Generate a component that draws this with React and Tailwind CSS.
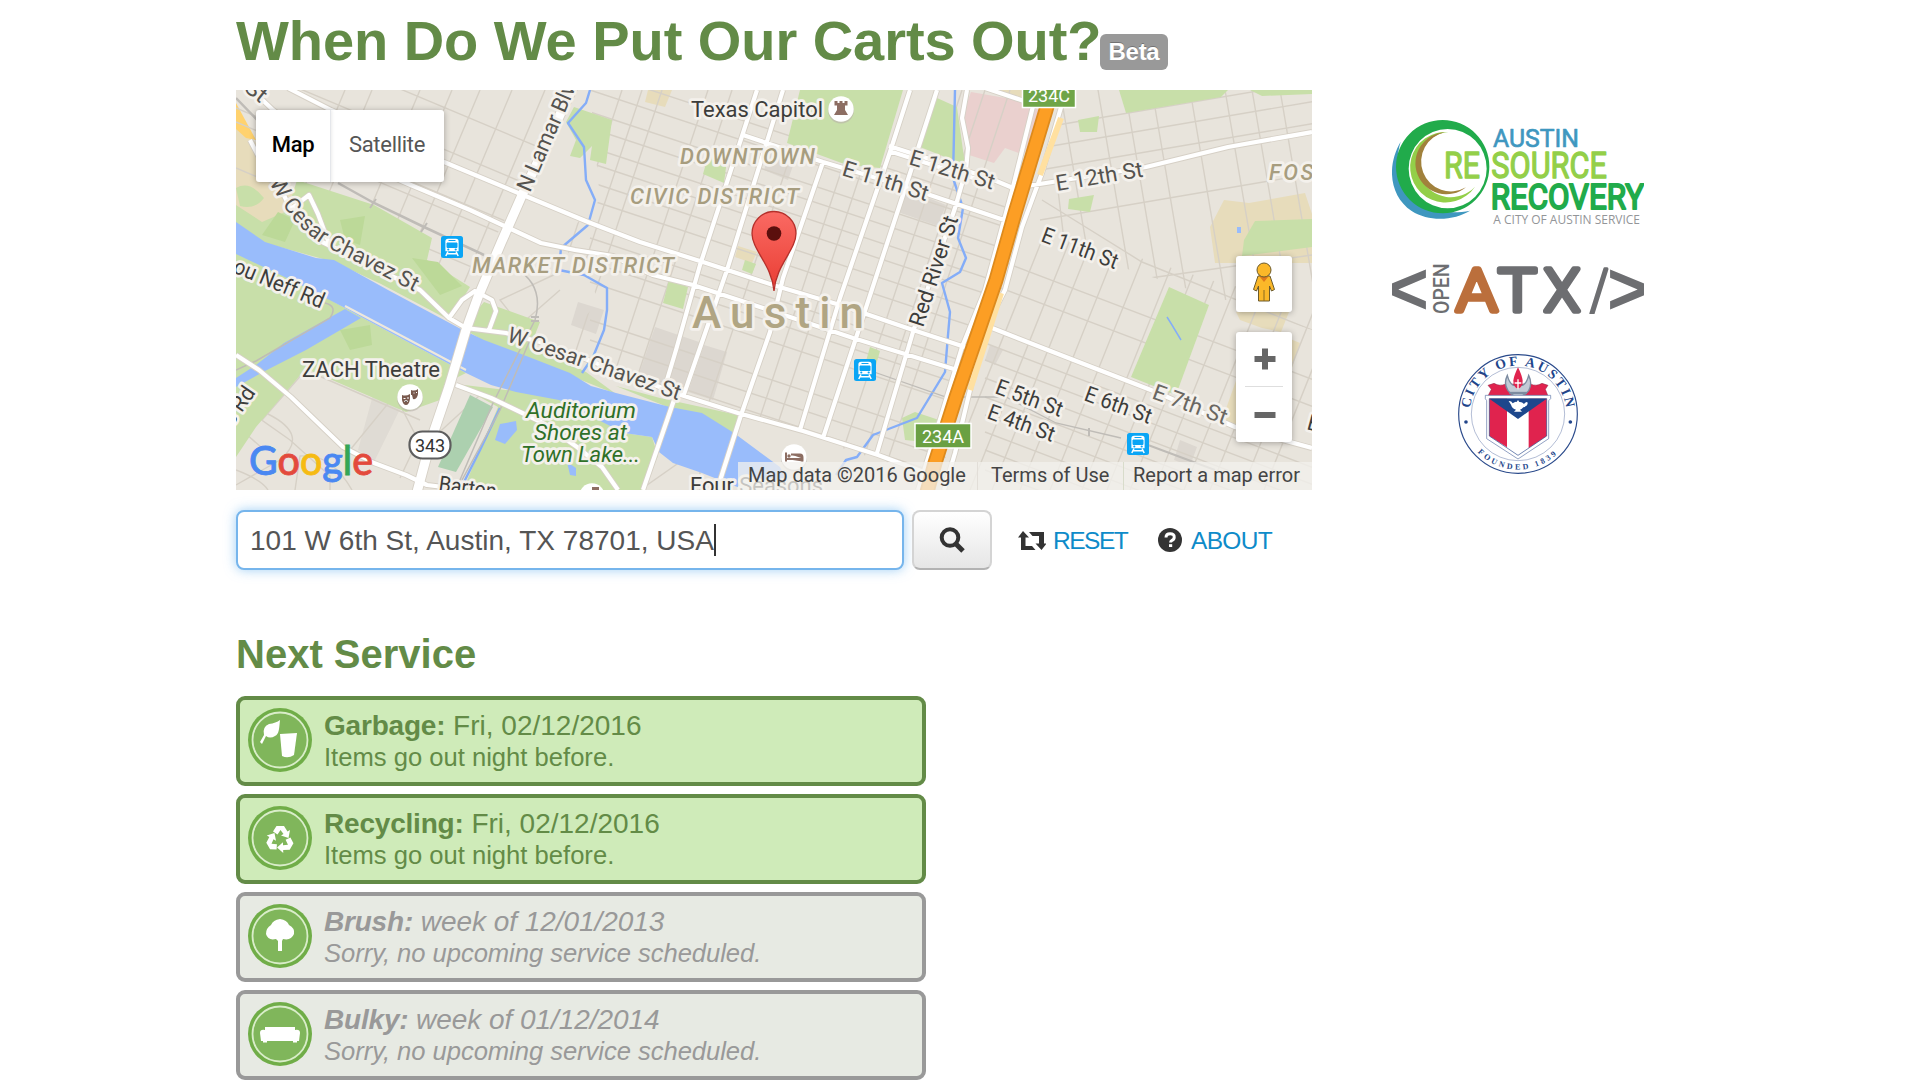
import React from "react";

const HALO = { paintOrder: "stroke", stroke: "#f4f1ec", strokeWidth: 5.5, strokeLinejoin: "round" };

/* Straight street or place label; w is the drawn width of the text. */
function Label({ x, y, w, r = 0, size = 22, fill = "#3d3d3b", italic, weight = 400, children }) {
  return (
    <text
      x={x}
      y={y}
      transform={`rotate(${r} ${x} ${y})`}
      textLength={w}
      lengthAdjust={italic && weight === 500 ? "spacing" : "spacingAndGlyphs"}
      fontFamily="Roboto, sans-serif"
      fontSize={size}
      fontWeight={weight}
      fontStyle={italic ? "italic" : "normal"}
      fill={fill}
      style={HALO}
    >
      {children}
    </text>
  );
}

/* Family of parallel minor streets: steep lines lean by `lean`, flat ones rise by `rise`. */
const steep = (xs, lean, top, bottom) =>
  xs.map((x) => `M${x} ${top}L${x + (bottom - top) * lean} ${bottom}`).join("");
const flat = (ys, rise, left, right) =>
  ys.map((y) => `M${left} ${y}L${right} ${y + (right - left) * rise}`).join("");

function Train({ x, y }) {
  return (
    <g transform={`translate(${x} ${y})`}>
      <rect width="22" height="22" rx="2.5" fill="#0aa5f5" />
      <path d="M7 2.8h8q2.6 0 2.6 2.6v9.8H4.4V5.4Q4.4 2.800 7 2.800z" fill="#fff" />
      <path d="M7.500 4.500h7M6 7h10v4.500H6z" fill="#0aa5f5" stroke="#0aa5f5" strokeWidth="1" />
      <circle cx="7.300" cy="13.500" r="1.100" fill="#0aa5f5" />
      <circle cx="14.700" cy="13.500" r="1.100" fill="#0aa5f5" />
      <path d="M7 15.500L4.800 20M15 15.500l2.200 4.500M6 17.800h10" stroke="#fff" strokeWidth="1.500" />
    </g>
  );
}

function Poi({ x, y, children }) {
  return (
    <g transform={`translate(${x} ${y})`}>
      <circle cy="1.500" r="13" fill="#b9b3ab" opacity=".6" />
      <circle r="12.700" fill="#fff" />
      {children}
    </g>
  );
}

const MAJOR = [
  "M250 88L273 110L300 130",
  "M288 88L331 110L444 162L523 195L588 222L640 242L703 262L773 285L840 305L913 330L965 347",
  "M330 150L406 183L470 210L513 230L541 243L575 250L613 256L653 275L693 285L763 308L853 338L957 370",
  "M250 140L262 163L277 182L291 209L316 239L345 253L420 290L449 318L466 328L506 333L540 342L681 395L738 413L803 431L878 455L940 478",
  "M291 209L309 195L318 214L330 246",
  "M449 318L462 300L475 291L492 300L496 311L489 330",
  "M456 385L491 398L541 422L577 447L602 467L618 490",
  "M236 355L259 370L291 397L343 447L374 463L406 475L427 485L460 489",
  "M757 90L700 265L676 350L664 390",
  "M674 400L643 490",
  "M783 90L727 270L683 397",
  "M741 415L717 490",
  "M823 162L783 278L770 332L740 418",
  "M910 90L890 152L840 298L800 430",
  "M937 90L903 195L857 335L823 438",
  "M967 90L962 118L968 148L966 170L955 208L913 332L877 453",
  "M743 135L823 162L890 182L930 195L1010 222",
  "M889 146L989 178L1013 188L1046 183L1146 167L1228 147L1312 132",
  "M889 151L989 183",
  "M985 88L1024 101",
  "M974 322L992 328L1053 352L1156 392L1235 427L1312 448",
  "M1037 90L1013 187L985 290L962 347L942 413L918 490",
  "M1066 90L1042 173L1022 227L1005 290L988 323L974 373L955 453L944 490",
];
const LAMAR = "M574 85L523 193L501 243L478 297L466 330L449 387L431 440L417 492";
const FREEWAY = "M1052 88L1046 110L1015 213L996 280L956 397L935 463L927 492";

function CityMap() {
  return (
    <svg className="block h-[400px] w-[1076px]" viewBox="236 90 1076 400">
      <defs>
        <clipPath id="grid-center">
          <path d="M590 90H1040L940 480L680 395L560 345L600 300L560 240L600 200Z" />
        </clipPath>
        <clipPath id="grid-north-west">
          <path d="M290 90H574L470 285L236 170V90Z" />
        </clipPath>
        <clipPath id="grid-east">
          <path d="M1020 220L1210 280L1312 305V490H945Z" />
        </clipPath>
        <clipPath id="grid-north-east">
          <path d="M1066 90H1312V330L1100 260L1022 227Z" />
        </clipPath>
        <linearGradient id="pin" x1="0" y1="0" x2="0" y2="1">
          <stop offset="0" stopColor="#fa6a63" />
          <stop offset="1" stopColor="#e93d33" />
        </linearGradient>
      </defs>
      <rect x="236" y="90" width="1076" height="400" fill="#e8e4dc" />

      {/* blocks */}
      <g fill="#dcd7d0">
        <path d="M655 327L702 343L683 395L638 377Z" />
        <path d="M704 345L727 352L713 400L688 392Z" />
        <path d="M578 302L604 310L596 334L571 325Z" />
        <path d="M908 190L946 205L938 226L898 212Z" />
        <path d="M990 345L1003 350L995 365L985 360Z" />
        <path d="M373 395L402 405L375 460L358 450Z" opacity=".7" />
        <path d="M1180 440L1197 447L1190 466L1174 460Z" />
        <path d="M770 152L795 160L788 180L764 170Z" />
      </g>
      <g fill="#e7dcbb">
        <path d="M236 122L256 143L275 175L297 197L285 213L270 222L245 225L236 210Z" />
        <path d="M648 90H672L665 107L645 102Z" />
        <path d="M738 246L757 252L752 263L735 257Z" />
        <path d="M985 90H1022V100Z" />
        <path d="M1224 200L1249 203L1305 193L1312 214V263H1215L1210 227Z" />
        <path d="M1236 312H1289L1281 332L1262 328L1240 320Z" />
        <path d="M1288 338L1300 343L1290 374L1270 420L1235 428L1222 420L1238 375Z" />
      </g>
      <path d="M236 103L256 140L246 138L236 129Z" fill="#ffd26e" />
      <path d="M971 92L1017 100L1040 110L1024 155L1005 148L994 163L969 155L963 113Z" fill="#ead0ce" />

      {/* minor streets */}
      <g fill="none" stroke="#d6d0c6" strokeWidth="1.400">
        <g clipPath="url(#grid-north-west)">
          <path d={steep([345, 372, 420, 452, 480, 512, 545], -0.42, 90, 290)} />
          <path d={flat([20, 62, 108, 122, 168], 0.42, 236, 600)} />
        </g>
        <g clipPath="url(#grid-center)">
          <path d={steep([622, 642, 662, 708, 732, 812, 868, 888, 962, 985, 1010], -0.33, 90, 490)} />
          <path d={flat([70, 90, 112, 128, 147, 163, 182, 200, 238, 262, 282, 320, 340, 358, 378], 0.33, 590, 1050)} />
        </g>
        <g clipPath="url(#grid-east)">
          <path d={steep([1050, 1078, 1100, 1128, 1158, 1190, 1215, 1238, 1262, 1292, 1318, 1350, 1372], -0.4, 220, 490)} />
          <path d={flat([255, 282, 343, 360, 378, 397, 415, 432, 450, 470], 0.38, 985, 1312)} />
        </g>
        <g clipPath="url(#grid-north-east)">
          <path d={steep([1060, 1098, 1125, 1152, 1190, 1225, 1252, 1280], 0.17, 90, 300)} />
          <path d={flat([128, 148, 170, 220], -0.17, 1040, 1312)} />
          <path d="M1042 200L1142 262L1312 330M1030 240L1140 300M1312 255L1150 278L1120 310M1058 190L1064 240L1040 280" />
        </g>
        <path d="M236 402L290 440L330 476L330 490M262 420L303 373M268 414Q310 435 280 460L236 485M350 450L395 395L418 440L400 478M310 372L420 420M236 425L262 448M480 395L420 450M560 272L500 300L520 325L560 290M236 470Q262 480 268 490M295 490L300 456Q330 452 352 490M520 485Q545 440 600 475" />
        <path d="M640 490L680 462L740 470M700 465V490" />
      </g>

      {/* parks */}
      <g fill="#c8dfa9">
        <path d="M297 180L374 205L432 238L427 260L470 287L449 320L381 284L334 262L265 243L236 223V205L262 222L285 212L292 196Z" />
        <path d="M236 188Q250 180 264 198Q255 210 240 206Z" />
        <path d="M484 302L540 322L531 345L586 372L616 394L484 341L462 328Z" />
        <path d="M616 386L660 398L738 415L734 434L702 414L670 408Z" />
        <path d="M236 253L291 278L363 318L466 373L452 380L440 400L406 412L309 370L302 373L256 427L236 457Z" />
        <path d="M456 384L506 390L534 390L559 398L624 433L652 437L658 456L643 490H463L498 407Z" />
        <path d="M800 90H903L880 168L847 165L787 143Z" />
        <path d="M937 98L957 107L965 165L920 147Z" />
        <path d="M1119 90H1228L1221 97L1126 113Z" />
        <path d="M1250 90H1312V94L1262 96Z" />
        <path d="M1078 120L1099 116L1097 132L1080 132Z" />
        <path d="M1069 199L1094 195L1090 212L1068 209Z" />
        <path d="M1255 221L1312 219V247L1242 256L1244 240Z" />
        <path d="M1169 287L1209 305L1176 395L1131 377Z" />
        <path d="M574 107L612 120L606 164L590 160L592 146L580 158L570 156L576 140L566 122Z" />
        <path d="M709 153L727 160L724 183L703 174Z" />
        <path d="M669 280L688 287L683 309L663 303Z" />
        <path d="M745 260L756 264L752 274L742 270Z" />
        <path d="M870 347L880 351L874 372L864 368Z" />
        <path d="M902 418L915 412L945 422L935 443L905 440Z" />
      </g>
      <g fill="#bcd998">
        <path d="M262 235L278 212L295 220L285 242Z" />
        <path d="M340 220L365 216L360 245L345 240Z" />
        <path d="M412 258L438 262L462 286L440 295Z" />
        <path d="M340 330L370 325L372 345L350 350Z" />
      </g>
      <path d="M470 395L493 407L456 472L438 467Z" fill="#acd0af" />

      {/* water */}
      <g fill="#99bcfb">
        <path d="M236 222L265 242L316 258L334 260L388 290L459 328L484 340L516 352L570 373L591 386L616 393L670 407L702 413L734 433L780 467L792 490H745L702 473L673 463L659 452L652 437L624 433L559 400L516 392L491 385L466 373L363 318L345 308L291 280L236 254Z" />
        <path d="M345 309L361 318L306 350L263 372L236 387V378L256 365L284 343Z" />
        <path d="M500 424L516 421L517 430L505 444L495 440Z" />
        <path d="M567 462L576 468L576 476L570 475Z" />
        <path d="M1237 227h4v6h-4z" />
      </g>
      <g fill="none" stroke="#84adf8" strokeWidth="2.400" strokeLinejoin="round">
        <path d="M590 90L586 103L568 123L584 147L586 180L595 200L588 225L561 248L559 270L584 275L607 288L607 310L604 330L593 357L582 373" />
        <path d="M955 90L953 178L963 208L958 238L966 258L960 272L942 283L950 312L948 335L945 372L917 418L873 435L857 457L846 460L836 475" />
        <path d="M500 408L480 450L460 490" />
        <path d="M1167 317L1172 325L1181 340" strokeWidth="1.500" />
      </g>
      <path d="M345 306L400 335L466 370" fill="none" stroke="#eee8dc" strokeWidth="2" />

      {/* railways */}
      <g fill="none" stroke="#bfbcb7" strokeWidth="2">
        <path d="M236 98L262 125M338 183L374 203L424 227L484 255" strokeWidth="2.500" />
        <path d="M515 268Q545 285 535 320L493 403L457 487M530 340L500 410L462 480" strokeWidth="1.500" />
        <path d="M874 372L946 397L1006 397L1056 423L1121 438" strokeWidth="1.300" />
        <path d="M1140 442L1215 470" strokeWidth="2" />
        <path d="M370 208l6-9M421 232l6-9M531 317h8M531 321h8M1089 428v8" />
        <path d="M236 370L256 361L330 318Q338 306 325 303" strokeWidth="1.500" />
      </g>

      {/* main roads */}
      <g fill="none" strokeLinejoin="round">
        <path d={MAJOR.join("")} stroke="#d6d0c6" strokeWidth="6" />
        <path d={LAMAR} stroke="#d6d0c6" strokeWidth="11" />
        <path d={MAJOR.join("")} stroke="#fff" strokeWidth="4.200" />
        <path d={LAMAR} stroke="#fff" strokeWidth="9.200" />
        <path d="M1061 118L1040 175M1001 293L970 390" stroke="#ffe0a0" strokeWidth="6" />
        <path d={FREEWAY} stroke="#dd8a1d" strokeWidth="15" />
        <path d={FREEWAY} stroke="#fc9e24" strokeWidth="11.500" />
      </g>

      {/* street names */}
      <defs>
        <path id="chavez-west" d="M261 170L279 199Q299 231 325 246L450 310" />
      </defs>
      <text fontFamily="Roboto, sans-serif" fontSize="22" fill="#55534f" style={HALO}>
        <textPath href="#chavez-west" startOffset="15" textLength="186">W Cesar Chavez St</textPath>
      </text>
      <g>
        <Label x={243} y={90} w={22} r={38} fill="#55534f">St</Label>
        <Label x={506} y={341} w={182} r={19} fill="#55534f">W Cesar Chavez St</Label>
        <Label x={530} y={193} w={127} r={-66.500} fill="#55534f">N Lamar Blvd</Label>
        <Label x={232} y={272} w={96} r={22.500}>ou Neff Rd</Label>
        <Label x={232} y={427} w={42} r={-55}>e Rd</Label>
        <Label x={841} y={175} w={89} r={17} fill="#55534f">E 11th St</Label>
        <Label x={908} y={164} w={88} r={17} fill="#55534f">E 12th St</Label>
        <Label x={1057} y={191} w={88} r={-9.500} fill="#55534f">E 12th St</Label>
        <Label x={1040} y={241} w={80} r={20.700}>E 11th St</Label>
        <Label x={923} y={328} w={115} r={-72}>Red River St</Label>
        <Label x={994} y={393} w={70} r={20}>E 5th St</Label>
        <Label x={986} y={418} w={70} r={20}>E 4th St</Label>
        <Label x={1083} y={400} w={70} r={20}>E 6th St</Label>
        <Label x={1151} y={398} w={78} r={20} fill="#6a6762">E 7th St</Label>
        <Label x={1306} y={429} w={72} r={15}>E 7th St</Label>
        <Label x={438} y={491} w={58} r={8}>Barton</Label>
        <Label x={690} y={493} w={133}>Four Seasons</Label>
      </g>

      {/* places */}
      <Label x={691} y={117} w={132}>Texas Capitol</Label>
      <Label x={302} y={377} w={138}>ZACH Theatre</Label>
      <Label x={680} y={163.500} w={135} italic weight={500} fill="#a79d7f">DOWNTOWN</Label>
      <Label x={630} y={204} w={169} italic weight={500} fill="#a79d7f">CIVIC DISTRICT</Label>
      <Label x={472} y={273} w={202} italic weight={500} fill="#a79d7f">MARKET DISTRICT</Label>
      <Label x={1269} y={180} w={60} italic weight={500} fill="#a79d7f">FOST</Label>
      <Label x={526} y={418} w={110} italic fill="#2f7028">Auditorium</Label>
      <Label x={534} y={440} w={93} italic fill="#2f7028">Shores at</Label>
      <Label x={521} y={462} w={119} italic fill="#2f7028">Town Lake...</Label>
      <text x="692" y="327.500" textLength="172" fontFamily="Roboto, sans-serif" fontSize="44" fontWeight="500" fill="#b0a583" style={HALO}>
        Austin
      </text>

      <Train x={441} y={236} />
      <Train x={854} y={359} />
      <Train x={1127} y={433} />
      <Poi x={841} y={109}>
        <path d="M-6.500-8h3v2h2v-2h3v2h2v-2h3v4.500h-2.500v4.500l3 5h-14l3-5v-4.500h-2.500z" fill="#8d6e63" />
      </Poi>
      <Poi x={410} y={397}>
        <path d="M-8-2q4 1.500 8-1v5q-1 6-4 6t-4-5zM1-7q4 1.500 7-1v5q-1 6-5 5l-1-4h-1z" fill="#7a5a4e" />
        <path d="M-6.500 1.500h2M-3 1h2M-6 4.500q2-2 4 0M3.500-4h1M6-4.500h1" stroke="#fff" />
      </Poi>
      <Poi x={794} y={457}>
        <path d="M-8-4.500v9M-8 2h16.500v2.500M-3-2.500h9q2.500 0 2.500 3v1" stroke="#8d6e63" strokeWidth="2" fill="#8d6e63" />
        <circle cx="-5" cy="-1" r="1.700" fill="#8d6e63" />
      </Poi>
      <Poi x={592} y={496}>
        <path d="M0-9h7v3H0z" fill="#8d6e63" />
      </Poi>

      <rect x="409.500" y="431.500" width="41" height="27" rx="13" fill="#fff" stroke="#5d5d5d" strokeWidth="2.200" />
      <text x="430" y="451.500" textAnchor="middle" textLength="30" fontFamily="Roboto, sans-serif" fontSize="18" fill="#333">343</text>
      <rect x="1022.500" y="80" width="53" height="27.500" fill="#6fa548" stroke="#fff" strokeWidth="1.500" />
      <text x="1049" y="102" textAnchor="middle" textLength="42" fontFamily="Roboto, sans-serif" fontSize="18" fill="#fff">234C</text>
      <rect x="915" y="423.500" width="56" height="24.500" fill="#6aa042" stroke="#fff" strokeWidth="1.500" />
      <text x="943" y="442.500" textAnchor="middle" textLength="42" fontFamily="Roboto, sans-serif" fontSize="18" fill="#fff">234A</text>

      {/* marker */}
      <path d="M774 291C772 265 752 250 752 233.500A22 22 0 0 1 796 233.500C796 250 776 265 774 291Z" fill="url(#pin)" stroke="#b5302b" strokeWidth="1.300" />
      <circle cx="774" cy="233.500" r="7.300" fill="#5b0f0d" />

      <text x="249" y="475" textLength="124" lengthAdjust="spacingAndGlyphs" fontFamily="Lato, sans-serif" fontSize="41" fontWeight="500" style={{ paintOrder: "stroke", strokeWidth: 0.8 }}>
        <tspan fill="#4a88f2" stroke="#4a88f2">G</tspan>
        <tspan fill="#e34a3c" stroke="#e34a3c">o</tspan>
        <tspan fill="#f6bb13" stroke="#f6bb13">o</tspan>
        <tspan fill="#4a88f2" stroke="#4a88f2">g</tspan>
        <tspan fill="#35a656" stroke="#35a656">l</tspan>
        <tspan fill="#e34a3c" stroke="#e34a3c">e</tspan>
      </text>
    </svg>
  );
}

function MapPanel() {
  return (
    <div className="relative h-[400px] w-[1076px] overflow-hidden font-[Roboto,sans-serif]">
      <CityMap />
      <div className="absolute top-5 left-5 flex h-[72px] w-[188px] rounded-[3px] bg-white text-[22px] leading-[70px] shadow-[0_1px_6px_rgba(0,0,0,0.3)]">
        <div className="w-[75px] border-r border-gray-200 text-center font-medium tracking-[-0.3px] text-black shadow-[1px_0_3px_rgba(0,0,0,0.08)]">Map</div>
        <div className="grow pr-px text-center tracking-[-0.3px] text-[#565656]">Satellite</div>
      </div>
      <div className="absolute top-[166px] right-5 flex h-14 w-14 items-center justify-center rounded-[3px] bg-white pb-1 shadow-[0_1px_6px_rgba(0,0,0,0.3)]">
        <svg className="h-[40px] w-[24px]" viewBox="0 0 24 40">
          <path d="M6 14H18L22.500 27.500L19.500 29L17.500 24V39H6.500V24L4.500 29L1.500 27.500Z" fill="#fbb829" stroke="#6b5a2c" strokeWidth="1" />
          <path d="M12 28V39" stroke="#8a6a20" strokeWidth="1" />
          <path d="M7.500 14.500H16.500L12 20Z" fill="#e0791c" />
          <circle cx="12" cy="8" r="7" fill="#fbb829" stroke="#6b5a2c" strokeWidth="1" />
        </svg>
      </div>
      <div className="absolute top-[242px] right-5 flex h-[110px] w-14 flex-col items-center rounded-[3px] bg-white shadow-[0_1px_6px_rgba(0,0,0,0.3)]">
        <svg className="h-[54px] w-14" viewBox="0 0 56 54">
          <path d="M18.500 27h21M29 16.500v21" stroke="#666" strokeWidth="6" />
        </svg>
        <div className="h-px w-[38px] bg-[#dedede]" />
        <svg className="h-[55px] w-14" viewBox="0 0 56 55">
          <path d="M18.500 28h21" stroke="#666" strokeWidth="6" />
        </svg>
      </div>
      <div className="absolute right-0 bottom-0 flex h-7 w-[574px] bg-[#f3f1ee]/75 text-[20px] leading-[27px] whitespace-nowrap text-[#444]">
        <div className="w-[240px] border-r border-[#e2ded8] pl-[10px]">Map data ©2016 Google</div>
        <div className="w-[146px] border-r border-[#d8dccb] pl-[13px]">Terms of Use</div>
        <div className="pl-[9px]">Report a map error</div>
      </div>
    </div>
  );
}

const ICONS = {
  garbage: (
    <>
      <path d="M32 12C31 22 31 26 27 28Q22 31 18 28L14 36L12 34L16 27Q14 19 21 16Q28 15 32 12Z" />
      <path d="M32 26L49 25L46 47Q40 51 34 48Z" />
    </>
  ),
  recycling: (
    <g transform="translate(32 33.500)">
      {[0, 120, 240].map((a) => (
        <path key={a} transform={`rotate(${a})`} d="M-7-8L-3.500-13.500H4L7.500-8L10-9.500L8.500-1.500L1-4L3.500-5.500L0.500-9.500L-2.500-5Z" />
      ))}
    </g>
  ),
  brush: (
    <>
      <path d="M32 15Q39 16 41 21Q47 24 46 30Q43 37 35 35L34 37H30L28 35Q20 37 18 30Q18 24 23 21Q25 16 32 15Z" />
      <path d="M30 35h4v12h-4z" />
    </>
  ),
  bulky: <path d="M17 25H47V28Q52 27 52 31L51 39H49V40.500H45V39H19V40.500H15V39H13L12 31Q12 27 17 28Z" />,
};

function ServiceIcon({ name }) {
  return (
    <svg className="h-16 w-16 shrink-0" viewBox="0 0 64 64">
      <circle cx="32" cy="32" r="32" fill="#70ad48" />
      <circle cx="32" cy="32" r="27.500" fill="#80b65b" stroke="#d9edc9" strokeWidth="1.800" />
      <g fill="#fff">{ICONS[name]}</g>
    </svg>
  );
}

const SERVICES = [
  { icon: "garbage", name: "Garbage:", date: "Fri, 02/12/2016", note: "Items go out night before.", active: true },
  { icon: "recycling", name: "Recycling:", date: "Fri, 02/12/2016", note: "Items go out night before.", active: true },
  { icon: "brush", name: "Brush:", date: "week of 12/01/2013", note: "Sorry, no upcoming service scheduled.", active: false },
  { icon: "bulky", name: "Bulky:", date: "week of 01/12/2014", note: "Sorry, no upcoming service scheduled.", active: false },
];

function ServiceCard({ icon, name, date, note, active }) {
  const tone = active
    ? "border-[#638b47] bg-[#cfebb9] text-[#638b47]"
    : "border-[#999999] bg-[#e7eae3] text-[#999999] italic tracking-[-0.05px]";
  return (
    <div className={`flex h-[90px] w-[690px] gap-3 rounded-[9px] border-4 p-2 ${tone}`}>
      <ServiceIcon name={icon} />
      <div className="pt-px whitespace-nowrap">
        <div className="text-[28px] leading-[34px]">
          <b className="tracking-[-0.2px]">{name}</b> {date}
        </div>
        <div className="text-[25.600px] leading-[28px]">{note}</div>
      </div>
    </div>
  );
}

function RecoveryLogo() {
  return (
    <svg className="h-[105px] w-[252px]" viewBox="36 60 756 315">
      <path d="M62 125C18 200 30 290 95 333C150 368 225 360 270 332C200 345 130 330 92 290C50 240 45 180 62 125Z" fill="#3f97bf" />
      <path fillRule="evenodd" d="M48 200A140 140 0 1 0 328 200A140 140 0 1 0 48 200ZM86 206A117 119 0 1 1 320 206A117 119 0 1 1 86 206Z" fill="#21ab4b" />
      <path d="M205 96A106 106 0 1 0 285 260A98 98 0 1 1 205 96Z" fill="#93cf49" />
      <path d="M195 97A93 93 0 1 0 258 262A89.500 89.500 0 1 1 195 97Z" fill="#a1813c" />
      <g fontFamily="Roboto, sans-serif" fontWeight="400" strokeLinejoin="round" strokeWidth="4">
        <text x="192" y="234" fontSize="110" textLength="108" lengthAdjust="spacingAndGlyphs" fill="#93cf49" stroke="#93cf49">RE</text>
        <text x="339" y="142" fontSize="77" textLength="258" lengthAdjust="spacingAndGlyphs" fill="#3f97bf" stroke="#3f97bf" strokeWidth="2">AUSTIN</text>
        <text x="334" y="234" fontSize="110" textLength="347" lengthAdjust="spacingAndGlyphs" fill="#93cf49" stroke="#93cf49">SOURCE</text>
        <text x="332" y="326" fontSize="107" textLength="460" lengthAdjust="spacingAndGlyphs" fill="#21ab4b" stroke="#21ab4b" strokeWidth="6">RECOVERY</text>
      </g>
      <text x="340" y="371" fontFamily="'Open Sans', sans-serif" fontSize="36" textLength="440" lengthAdjust="spacingAndGlyphs" fill="#939598">
        A CITY OF AUSTIN SERVICE
      </text>
    </svg>
  );
}

function OpenAtxLogo() {
  return (
    <svg className="h-[51px] w-[252px]" viewBox="36 490 756 153">
      <g fontFamily="'Liberation Sans', sans-serif" fontWeight="700" fill="#6d6e71">
        <text x="27" y="643" fontSize="220" textLength="119" lengthAdjust="spacingAndGlyphs">&lt;</text>
        <text x="682" y="643" fontSize="220" textLength="119" lengthAdjust="spacingAndGlyphs">&gt;</text>
      </g>
      <text transform="translate(207 643) rotate(-90)" fontFamily="Roboto, sans-serif" fontWeight="500" fontSize="67" textLength="152" lengthAdjust="spacingAndGlyphs" fill="#6d6e71">
        OPEN
      </text>
      <g fontFamily="Roboto, sans-serif" fontWeight="300" fontSize="177" strokeWidth="16" strokeLinejoin="round" fill="#6d6e71" stroke="#6d6e71">
        <text x="228" y="633" textLength="124" lengthAdjust="spacingAndGlyphs" fill="#bb6f3c" stroke="#bb6f3c">A</text>
        <text x="354" y="633" textLength="116" lengthAdjust="spacingAndGlyphs">T</text>
        <text x="492" y="633" textLength="108" lengthAdjust="spacingAndGlyphs">X</text>
        <text x="630" y="632" textLength="56" lengthAdjust="spacingAndGlyphs" strokeWidth="10" fontSize="172">/</text>
      </g>
    </svg>
  );
}

function CitySeal() {
  return (
    <svg className="h-[120px] w-[120px]" viewBox="234 762 360 360">
      <defs>
        <path id="seal-top" d="M270 925A145 145 0 0 1 558 925" />
        <path id="seal-bottom" d="M293 1057A168 168 0 0 0 536 1057" />
      </defs>
      <circle cx="414" cy="942" r="178" fill="#fff" stroke="#2a4a8b" strokeWidth="3.500" />
      <circle cx="414" cy="942" r="140" fill="#fff" stroke="#8c9cc0" strokeWidth="2" />
      <g fontFamily="'Liberation Serif', serif" fontWeight="700" fill="#22458a">
        <text fontSize="41">
          <textPath href="#seal-top" textLength="420">CITY OF AUSTIN</textPath>
        </text>
        <text fontSize="24">
          <textPath href="#seal-bottom" textLength="262">FOUNDED 1839</textPath>
        </text>
      </g>
      <circle cx="258" cy="966" r="5.500" fill="#22458a" />
      <circle cx="571" cy="966" r="5.500" fill="#22458a" />
      <path d="M324 888L334 868L324 856L342 850Q360 860 376 852H452Q468 860 486 850L504 856L496 868L504 888Z" fill="#e0234e" stroke="#8b2445" strokeWidth="1.500" />
      <path d="M382 826Q370 850 384 872Q398 890 414 890Q432 890 446 872Q458 850 446 826Q440 850 428 856H400Q388 850 382 826Z" fill="#c3cbd6" stroke="#7c8ba0" strokeWidth="4" />
      <path d="M414 802Q426 826 428 842Q428 862 414 866Q400 862 400 842Q402 826 414 802Z" fill="#e0234e" />
      <path d="M414 838V868M404 849H424" stroke="#fff" strokeWidth="4" />
      <path d="M388 879H440" stroke="#7c8ba0" strokeWidth="7" />
      <path d="M316 886H512V896L506 902V1016L414 1077L320 1016V902L316 896Z" fill="#fff" stroke="#5b73a6" strokeWidth="2" />
      <path d="M328 896H500V1008L414 1066L328 1008Z" fill="#fff" />
      <path d="M328 896H381V1042L328 1008ZM446 896H500V1008L446 1044Z" fill="#e0234e" />
      <path d="M328 896H500L414 957Z" fill="#1d478c" />
      <path d="M386 903Q394 902 398 910Q406 904 410 906L414 900L418 906Q426 905 432 912Q440 902 443 908Q444 918 430 922Q426 928 420 929L426 935H402L408 929Q396 926 393 914Z" fill="#fff" />
      <path d="M328 896H500V1008L414 1066L328 1008Z" fill="none" stroke="#2a4a8b" strokeWidth="2" />
    </svg>
  );
}

function SearchBar() {
  return (
    <div className="mt-5 flex h-[60px] items-center">
      <div className="flex h-[60px] w-[668px] items-center rounded-lg border-2 border-[#76b5ec] bg-white pt-0.5 pl-3 text-[28px] tracking-[0.020px] whitespace-nowrap text-[#555] shadow-[0_0_12px_rgba(82,168,236,0.55)]">
        101 W 6th St, Austin, TX 78701, USA
        <span className="-mt-0.5 h-8 w-[2px] bg-[#333]" />
      </div>
      <button className="ml-2 flex h-[60px] w-20 items-center justify-center rounded-lg border-2 border-[#d4d4d4] border-b-[#b3b3b3] bg-gradient-to-b from-white to-[#e6e6e6]">
        <svg className="h-[26px] w-[26px]" viewBox="0 0 26 26" fill="none" stroke="#333">
          <circle cx="11" cy="10.500" r="8.300" strokeWidth="4" />
          <path d="M16.500 16.500L24 24" strokeWidth="5" />
        </svg>
      </button>
      <svg className="mt-0.5 ml-[26px] h-5 w-7" viewBox="0 0 28 20" fill="#333">
        <path d="M5 0L11 6.500H7.500V15H14L17.500 19H3V6.500H0Z" />
        <path d="M11 1H26V12.500H28.500L23.500 19L17.500 12.500H21V5H14.500Z" />
      </svg>
      <span className="mt-0.5 ml-[7px] w-[75px] text-[24.500px] tracking-[-1.500px] text-[#0e8bc9]">RESET</span>
      <svg className="ml-[30px] h-6 w-6" viewBox="0 0 24 24">
        <circle cx="12" cy="12" r="12" fill="#333" />
        <path d="M8 9.500Q8 5.800 12.200 5.800T16.200 9.200Q16.200 11.300 14 12.300Q12.600 13 12.600 14.500" fill="none" stroke="#fff" strokeWidth="3" />
        <path d="M11 16.200h3.200v2.800H11z" fill="#fff" />
      </svg>
      <span className="mt-0.5 ml-[9px] text-[24.500px] tracking-[-0.700px] text-[#0e8bc9]">ABOUT</span>
    </div>
  );
}

export default function App() {
  return (
    <div className="flex h-[1080px] w-[1920px] overflow-hidden bg-white pl-[236px] font-['Liberation_Sans',Arial,sans-serif]">
      <main className="w-[1076px]">
        <header className="flex h-[90px] text-[#638b47]">
          <h1 className="w-[864px] text-[56px] leading-[81px] font-bold tracking-[-0.050px] whitespace-nowrap">When Do We Put Our Carts Out?</h1>
          <span className="mt-[34px] flex h-9 w-[68px] items-center justify-center rounded-md bg-[#999] text-[24px] font-bold tracking-[-0.300px] text-white [text-shadow:0_-1px_0_rgba(0,0,0,0.25)]">
            Beta
          </span>
        </header>
        <MapPanel />
        <SearchBar />
        <h2 className="mt-[59px] h-[67px] text-[40px] leading-[50px] font-bold text-[#638b47]">Next Service</h2>
        <div className="flex flex-col gap-2">
          {SERVICES.map((s) => (
            <ServiceCard key={s.icon} {...s} />
          ))}
        </div>
      </main>
      <aside className="mt-[120px] ml-20 flex w-[252px] flex-col items-center">
        <RecoveryLogo />
        <div className="mt-[38px]">
          <OpenAtxLogo />
        </div>
        <div className="mt-10">
          <CitySeal />
        </div>
      </aside>
    </div>
  );
}
